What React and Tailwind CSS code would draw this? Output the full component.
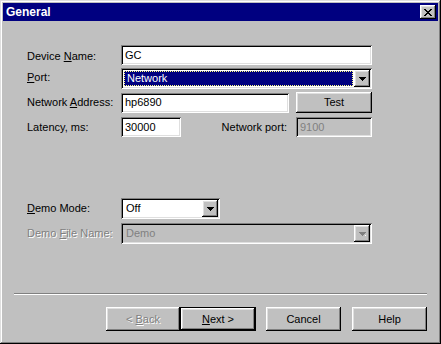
const raised = "shadow-[inset_-1px_-1px_#000,inset_1px_1px_#fff,inset_-2px_-2px_#808080,inset_2px_2px_#dfdfdf]";
const sunken = "shadow-[inset_1px_1px_#808080,inset_-1px_-1px_#fff,inset_2px_2px_#000,inset_-2px_-2px_#dfdfdf]";

function U({ children }) {
  return <span className="underline underline-offset-[1px]">{children}</span>;
}

function Arrow({ disabled }) {
  return (
    <div className={`w-[16px] h-full bg-[#c0c0c0] flex items-center justify-center ${raised}`}>
      <svg width="7" height="4" viewBox="0 0 7 4" shapeRendering="crispEdges">
        {disabled && <path d="M2 4h5v-1h-1v1z" fill="#fff" />}
        <path d="M0 0h7v1h-1v1h-1v1h-1v1h-1v-1h-1v-1h-1v-1h-1z" fill={disabled ? "#808080" : "#000"} />
      </svg>
    </div>
  );
}

function Label({ children, disabled, className = "" }) {
  return (
    <div className={`w-[94px] shrink-0 leading-none ${disabled ? "text-[#808080] [text-shadow:1px_1px_#fff]" : "text-black"} ${className}`}>
      {children}
    </div>
  );
}

function Btn({ children, def, disabled, className = "" }) {
  const inner = (
    <div className={`w-full h-full bg-[#c0c0c0] flex items-center justify-center whitespace-pre ${raised} ${disabled ? "text-[#808080] [text-shadow:1px_1px_#fff]" : ""}`}>
      {children}
    </div>
  );
  if (def) {
    return <div className={`border border-black ${className}`}>{inner}</div>;
  }
  return <div className={className}>{inner}</div>;
}

export default function App() {
  return (
    <div
      className="w-[441px] h-[344px] bg-[#c0c0c0] p-[3px] flex flex-col text-[11px] shadow-[inset_-1px_-1px_#000,inset_1px_1px_#dfdfdf,inset_-2px_-2px_#808080,inset_2px_2px_#fff]"
      style={{ fontFamily: '"Liberation Sans", Arial, sans-serif' }}
    >
      {/* Title bar */}
      <div className="h-[18px] bg-[#000080] flex items-center justify-between pl-[3px] pr-[2px]">
        <span className="text-white font-bold text-[12px] leading-none">General</span>
        <div className={`w-[16px] h-[14px] bg-[#c0c0c0] flex items-center justify-center ${raised}`}>
          <svg width="8" height="7" viewBox="0 0 8 7" shapeRendering="crispEdges">
            <path d="M0 0h2v1h1v1h2v-1h1v-1h2v1h-1v1h-1v1h-1v1h1v1h1v1h1v1h-2v-1h-1v-1h-2v1h-1v1h-2v-1h1v-1h1v-1h1v-1h-1v-1h-1v-1h-1z" fill="#000" />
          </svg>
        </div>
      </div>

      {/* Body */}
      <div className="flex-1 flex flex-col pl-[24px] pr-[66px] pt-[24px]">
        {/* Device Name */}
        <div className="flex items-center h-[20px]">
          <Label className="pt-[2px]">Device <U>N</U>ame:</Label>
          <div className={`flex-1 h-[20px] bg-white flex items-center px-[4px] ${sunken}`}>GC</div>
        </div>
        {/* Port */}
        <div className="flex items-center h-[21px] mt-[3px]">
          <Label className="pb-[2px]"><U>P</U>ort:</Label>
          <div className={`flex-1 h-[21px] bg-white flex p-[2px] ${sunken}`}>
            <div className="flex-1 p-[1px]">
              <div className="h-full bg-[#000080] border border-dotted border-[#ffff80] text-white flex items-center px-[2px]">Network</div>
            </div>
            <Arrow />
          </div>
        </div>
        {/* Network Address */}
        <div className="flex items-center h-[21px] mt-[3px]">
          <Label>Network <U>A</U>ddress:</Label>
          <div className={`w-[168px] h-[20px] bg-white flex items-center px-[4px] ${sunken}`}>hp6890</div>
          <Btn className="ml-auto w-[76px] h-[21px]">Test</Btn>
        </div>
        {/* Latency */}
        <div className="flex items-center h-[20px] mt-[4px]">
          <Label>Latency, ms:</Label>
          <div className={`w-[60px] h-[20px] bg-white flex items-center px-[4px] ${sunken}`}>30000</div>
          <div className="flex-1 text-right pr-[9px]">Network port:</div>
          <div className={`w-[76px] h-[20px] bg-[#c0c0c0] text-[#808080] flex items-center px-[4px] ${sunken}`}>9100</div>
        </div>

        {/* Demo Mode */}
        <div className="flex items-center h-[21px] mt-[61px]">
          <Label><U>D</U>emo Mode:</Label>
          <div className={`w-[99px] h-[21px] bg-white flex p-[2px] ${sunken}`}>
            <div className="flex-1 flex items-center px-[3px]">Off</div>
            <Arrow />
          </div>
        </div>
        {/* Demo File Name */}
        <div className="flex items-center h-[21px] mt-[4px]">
          <Label disabled>Demo <U>F</U>ile Name:</Label>
          <div className={`flex-1 h-[21px] bg-[#c0c0c0] flex p-[2px] ${sunken}`}>
            <div className="flex-1 flex items-center px-[3px] text-[#808080]">Demo</div>
            <Arrow disabled />
          </div>
        </div>
      </div>

      {/* Separator */}
      <div className="mx-[11px] h-[2px] border-t border-t-[#808080] border-b border-b-white"></div>

      {/* Buttons */}
      <div className="flex justify-end items-start pr-[11px] pt-[12px] pb-[10px]">
        <Btn disabled className="w-[74px] h-[24px]">{"< "}<U>B</U>ack</Btn>
        <Btn def className="w-[76px] h-[24px]"><U>N</U>{"ext >"}</Btn>
        <Btn className="w-[75px] h-[24px] ml-[10px]">Cancel</Btn>
        <Btn className="w-[75px] h-[24px] ml-[11px]">Help</Btn>
      </div>
    </div>
  );
}
